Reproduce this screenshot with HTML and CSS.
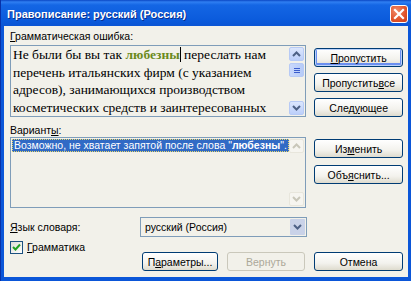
FILE: index.html
```html
<!DOCTYPE html>
<html>
	<head>
		<meta charset="utf-8">
		<title>Правописание</title>
		<link rel="stylesheet" href="styles.css">
	</head>

	<body>
		<div class="window">
			<div class="titlebar">
				<span class="title">Правописание: русский (Россия)</span>
				<span class="close">
					<svg width="12" height="12" viewBox="0 0 12 12"><path d="M2 2 L10 10 M10 2 L2 10" stroke="#fff" stroke-width="2.2" stroke-linecap="square"/></svg>
				</span>
			</div>

			<div class="client">
				<div class="section top">
					<div class="left">
						<div class="label"><u>Г</u>рамматическая ошибка:</div>
						<div class="editbox">
							<div class="doc">
								Не были бы вы так <b class="err">любезны</b><span class="caret"></span> переслать нам<br>
								перечень итальянских фирм (с указанием<br>
								адресов), занимающихся производством<br>
								косметических средств и заинтересованных
							</div>
							<div class="scroll">
								<span class="sbtn"><svg width="9" height="6" viewBox="0 0 9 6"><path d="M1 5 L4.5 1.5 L8 5" stroke="#4d6185" stroke-width="2" fill="none"/></svg></span>
								<span class="thumb"><i></i><i></i><i></i></span>
								<span class="sbtn bottom"><svg width="9" height="6" viewBox="0 0 9 6"><path d="M1 1 L4.5 4.5 L8 1" stroke="#4d6185" stroke-width="2" fill="none"/></svg></span>
							</div>
						</div>
					</div>
					<div class="right">
						<span class="btn default"><u>П</u>ропустить</span>
						<span class="btn">Пропустить <u>в</u>се</span>
						<span class="btn">След<u>у</u>ющее</span>
					</div>
				</div>

				<div class="section middle">
					<div class="left">
						<div class="label small">Вариант<u>ы</u>:</div>
						<div class="listbox">
							<div class="items">
								<span class="item">Возможно, не хватает запятой после слова "<b>любезны</b>".</span>
							</div>
							<div class="scroll off">
								<span class="sbtn"><svg width="9" height="6" viewBox="0 0 9 6"><path d="M1 5 L4.5 1.5 L8 5" stroke="#c9c7ba" stroke-width="2" fill="none"/></svg></span>
								<span class="sbtn bottom"><svg width="9" height="6" viewBox="0 0 9 6"><path d="M1 1 L4.5 4.5 L8 1" stroke="#c9c7ba" stroke-width="2" fill="none"/></svg></span>
							</div>
						</div>
					</div>
					<div class="right">
						<span class="btn">Из<u>м</u>енить</span>
						<span class="btn">Объ<u>я</u>снить...</span>
					</div>
				</div>

				<div class="lang">
					<span class="lang-label"><u>Я</u>зык словаря:</span>
					<div class="combo">
						<span class="combo-text">русский (Россия)</span>
						<span class="combo-btn"><svg width="9" height="6" viewBox="0 0 9 6"><path d="M1 1 L4.5 4.5 L8 1" stroke="#4d6185" stroke-width="2" fill="none"/></svg></span>
					</div>
				</div>

				<div class="bottom">
					<div class="check">
						<span class="box"><svg width="9" height="9" viewBox="0 0 9 9"><path d="M1 4 L3.5 6.5 L8 1.5" stroke="#21a121" stroke-width="2" fill="none"/></svg></span>
						<span><u>Г</u>рамматика</span>
					</div>
					<div class="actions">
						<span class="btn w76">П<u>а</u>раметры...</span>
						<span class="btn w78 disabled">Вернуть</span>
						<span class="btn">Отмена</span>
					</div>
				</div>
			</div>
		</div>
	</body>
</html>
```

FILE: styles.css
```css
:root {
	--frame: #0b56d8;
	--face: #f2f1ea;
	--edge: #7f9db9;
	--btn-border: #003c74;
	--select: #316ac5;
}

html, body {
	margin: 0;
	padding: 0;
	background: var(--face);
}

body {
	font-family: 'Liberation Sans', Arial, sans-serif;
	font-size: 10.5px;
	color: #000;
}

u {
	text-decoration: underline;
}

.window {
	width: 411px;
	height: 281px;
	box-sizing: border-box;
	background: var(--frame);
	padding: 0 3px 4px 3px;
	display: flex;
	flex-direction: column;
	border-left: 1px solid #0831a8;
}

.titlebar {
	height: 26px;
	flex: none;
	display: flex;
	align-items: center;
	justify-content: space-between;
	margin: 0 -3px;
	padding: 0 3px 0 6px;
	background: linear-gradient(#0a47c4 0, #2f7ff2 2px, #1466e4 5px, #0b5bdc 20px, #0b55d4 26px);
}

.title {
	color: #fff;
	font-weight: bold;
	font-size: 11px;
	text-shadow: 1px 1px 0 #0a2f8c;
	margin-top: 1px;
}

.close {
	width: 16px;
	height: 16px;
	border: 1px solid #fff;
	border-radius: 3px;
	background: radial-gradient(circle at 35% 30%, #f08a6a, #e0522a 60%, #c8401c);
	display: flex;
	align-items: center;
	justify-content: center;
	margin-top: 1px;
}

.client {
	flex: 1;
	background: var(--face);
	padding: 0 5px 0 6px;
}

.section {
	display: flex;
	gap: 8px;
}

.left {
	width: 297px;
}

.right {
	width: 89px;
	display: flex;
	flex-direction: column;
}

.top .right {
	padding-top: 22px;
	gap: 6px;
}

.middle {
	margin-top: 7px;
}

.middle .right {
	padding-top: 15px;
	gap: 7px;
}

.label {
	height: 13px;
	line-height: 13px;
	margin: 4px 0 2px 0;
}

.label.small {
	margin: 0;
}

.editbox, .listbox {
	height: 71px;
	border: 1px solid var(--edge);
	box-sizing: border-box;
	display: flex;
	overflow: hidden;
}

.editbox {
	background: var(--face);
	height: 72px;
}

.doc {
	flex: 1;
	font-family: 'Liberation Serif', 'DejaVu Serif', serif;
	font-size: 13.5px;
	line-height: 17.5px;
	padding-left: 2px;
	white-space: nowrap;
	overflow: hidden;
}

.err {
	color: #6b8a1c;
}

.caret {
	display: inline-block;
	width: 1px;
	height: 15px;
	background: #000;
	vertical-align: -3px;
}

.scroll {
	width: 15px;
	display: flex;
	flex-direction: column;
	padding: 1px 1px 1px 0;
}

.sbtn {
	height: 14px;
	border: 1px solid #b7caf5;
	border-radius: 2px;
	background: linear-gradient(#dbe6fd, #bccffa);
	display: flex;
	align-items: center;
	justify-content: center;
	box-sizing: border-box;
}

.sbtn.bottom {
	margin-top: auto;
}

.thumb {
	height: 12px;
	margin-top: 2px;
	border: 1px solid #b7caf5;
	border-radius: 2px;
	background: linear-gradient(90deg, #c9d8fc, #b6cbf8);
	display: flex;
	flex-direction: column;
	align-items: center;
	justify-content: center;
	gap: 1px;
}

.thumb i {
	display: block;
	width: 6px;
	height: 1px;
	background: #3a5ccc;
}

.scroll.off .sbtn {
	border-color: #e8e6dc;
	background: #f6f5f0;
}

.listbox {
	background: var(--face);
}

.items {
	flex: 1;
	padding: 1px 0 0 1px;
}

.item {
	display: inline-block;
	background: var(--select);
	color: #fff;
	height: 13px;
	line-height: 13px;
	padding: 0 2px;
	outline: 1px dotted #e8d86a;
	outline-offset: -1px;
	white-space: nowrap;
}

.btn {
	height: 19px;
	box-sizing: border-box;
	border: 1px solid var(--btn-border);
	border-radius: 3px;
	background: linear-gradient(#fff, #f3f2ed 60%, #dedbce);
	display: flex;
	align-items: center;
	justify-content: center;
	white-space: nowrap;
}

.btn.default {
	box-shadow: inset 0 0 0 1px #b9d1fa, inset 0 -1px 0 2px #6b8ff0;
}

.btn.disabled {
	border-color: #cac8bb;
	color: #aca899;
	background: var(--face);
}

.lang {
	display: flex;
	align-items: center;
	margin-top: 9px;
}

.lang-label {
	width: 130px;
}

.combo {
	width: 167px;
	height: 20px;
	box-sizing: border-box;
	border: 1px solid var(--edge);
	background: var(--face);
	display: flex;
	align-items: center;
	padding: 1px;
}

.combo-text {
	flex: 1;
	padding-left: 3px;
}

.combo-btn {
	width: 15px;
	height: 16px;
	background: #c9d2e8;
	border-radius: 1px;
	display: flex;
	align-items: center;
	justify-content: center;
}

.bottom {
	display: flex;
	margin-top: 4px;
}

.check {
	display: flex;
	align-items: flex-start;
	gap: 4px;
	height: 13px;
	line-height: 13px;
}

.box {
	width: 13px;
	height: 13px;
	box-sizing: border-box;
	border: 1px solid #1c5180;
	background: linear-gradient(135deg, #dcdcd5, #fff);
	display: flex;
	align-items: center;
	justify-content: center;
}

.actions {
	margin-left: auto;
	margin-top: 11px;
	display: flex;
	gap: 9px;
}

.actions .btn {
	width: 89px;
}

.actions .btn.w76 {
	width: 76px;
}

.actions .btn.w78 {
	width: 78px;
}
```
